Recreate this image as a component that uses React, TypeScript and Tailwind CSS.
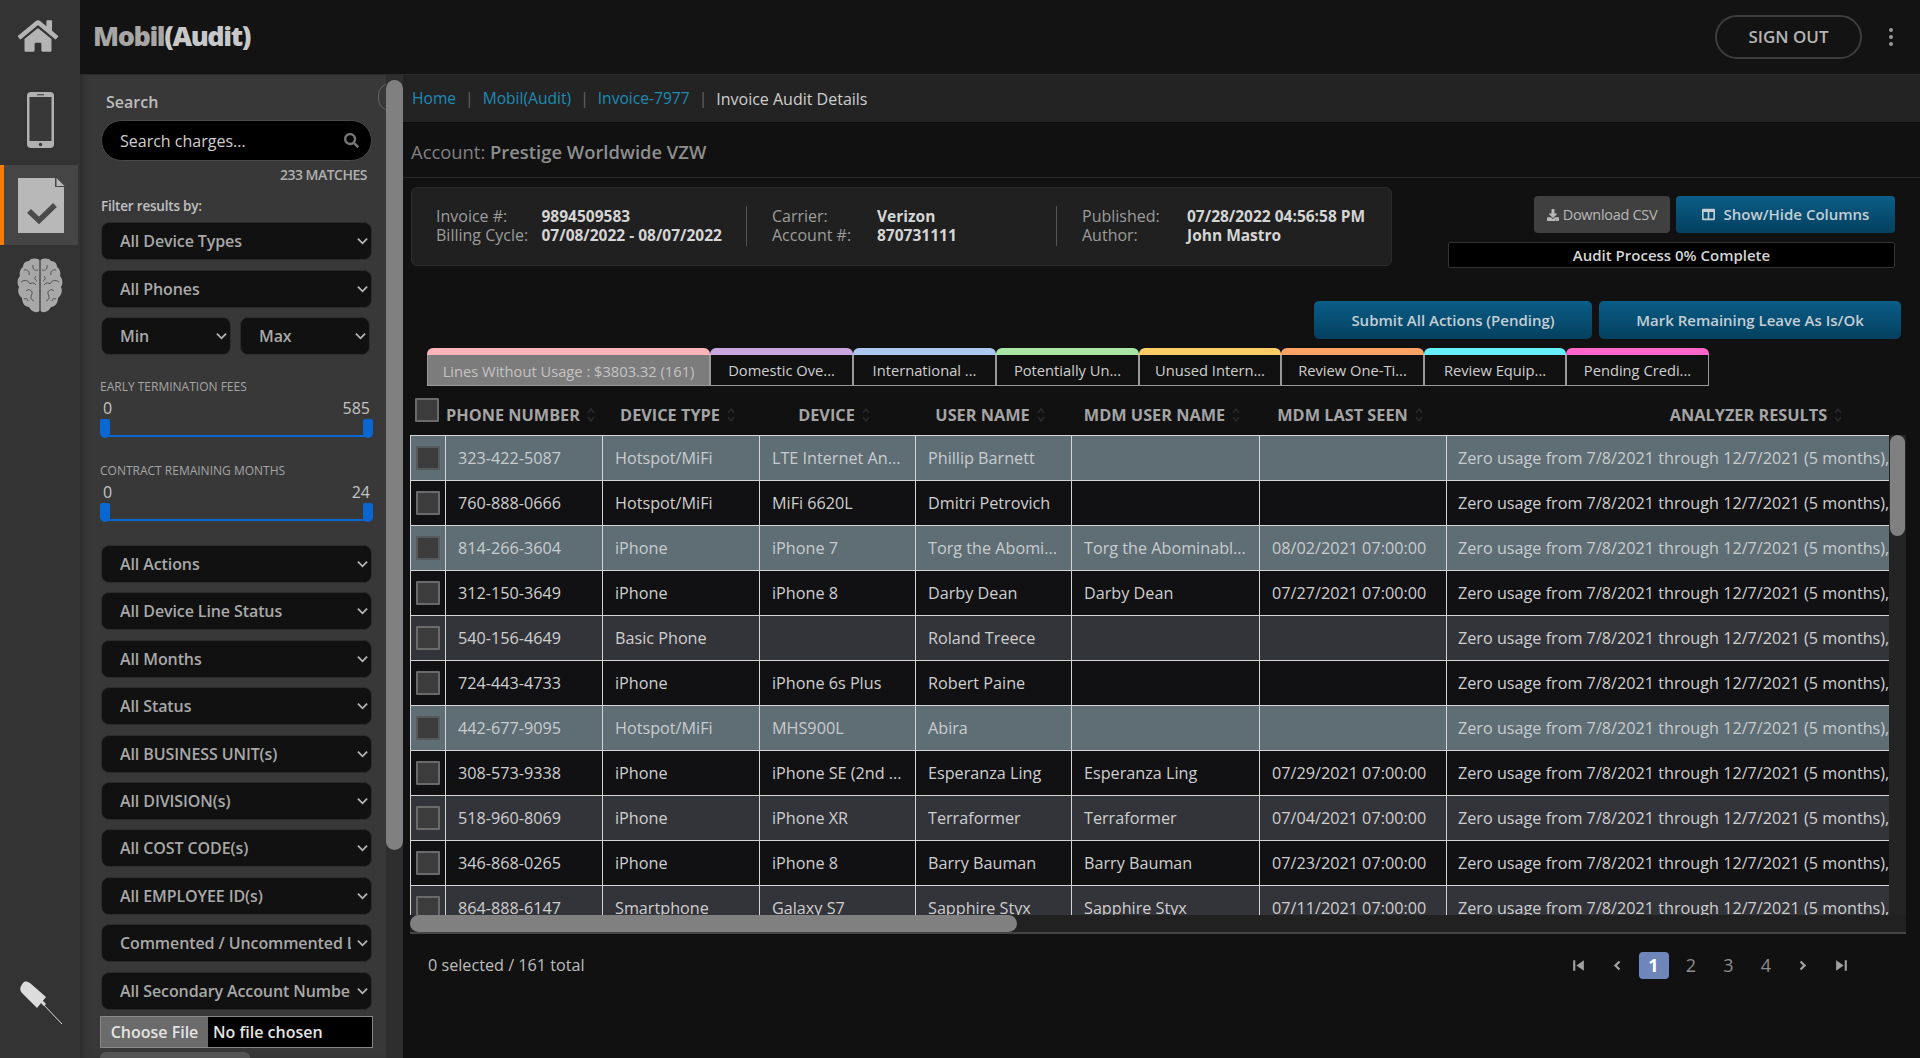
import { FaHome, FaSearch, FaDownload, FaColumns } from 'react-icons/fa';

const rowGrid = 'grid grid-cols-[36px_157px_157px_156px_156px_188px_187px_620px]';

const rows = [
  ['323-422-5087', 'Hotspot/MiFi', 'LTE Internet An...', 'Phillip Barnett', '', '', 'sel'],
  ['760-888-0666', 'Hotspot/MiFi', 'MiFi 6620L', 'Dmitri Petrovich', '', '', 'dark'],
  ['814-266-3604', 'iPhone', 'iPhone 7', 'Torg the Abomi...', 'Torg the Abominabl...', '08/02/2021 07:00:00', 'sel'],
  ['312-150-3649', 'iPhone', 'iPhone 8', 'Darby Dean', 'Darby Dean', '07/27/2021 07:00:00', 'dark'],
  ['540-156-4649', 'Basic Phone', '', 'Roland Treece', '', '', 'gray'],
  ['724-443-4733', 'iPhone', 'iPhone 6s Plus', 'Robert Paine', '', '', 'dark'],
  ['442-677-9095', 'Hotspot/MiFi', 'MHS900L', 'Abira', '', '', 'sel'],
  ['308-573-9338', 'iPhone', 'iPhone SE (2nd ...', 'Esperanza Ling', 'Esperanza Ling', '07/29/2021 07:00:00', 'dark'],
  ['518-960-8069', 'iPhone', 'iPhone XR', 'Terraformer', 'Terraformer', '07/04/2021 07:00:00', 'gray'],
  ['346-868-0265', 'iPhone', 'iPhone 8', 'Barry Bauman', 'Barry Bauman', '07/23/2021 07:00:00', 'dark'],
  ['864-888-6147', 'Smartphone', 'Galaxy S7', 'Sapphire Styx', 'Sapphire Styx', '07/11/2021 07:00:00', 'gray'],
];

const rowBg: Record<string, string> = {
  sel: 'bg-[#5f6e75] text-[#c8cccf]',
  dark: 'bg-[#111113] text-[#cfcfcf]',
  gray: 'bg-[#33343a] text-[#cfcfcf]',
};

const tabs = [
  { label: 'Domestic Ove...', w: 'w-[143px]', c: 'bg-[#c9a6e0]' },
  { label: 'International ...', w: 'w-[143px]', c: 'bg-[#aac8f0]' },
  { label: 'Potentially Un...', w: 'w-[143px]', c: 'bg-[#a8e6a3]' },
  { label: 'Unused Intern...', w: 'w-[142px]', c: 'bg-[#ffcc66]' },
  { label: 'Review One-Ti...', w: 'w-[143px]', c: 'bg-[#ffa366]' },
  { label: 'Review Equip...', w: 'w-[142px]', c: 'bg-[#66f0ff]' },
  { label: 'Pending Credi...', w: 'w-[143px]', c: 'bg-[#ff66cc]' },
];

const headers = [
  { label: 'PHONE NUMBER', pad: 'pr-[7px]' },
  { label: 'DEVICE TYPE', pad: 'pr-[7px]' },
  { label: 'DEVICE', pad: 'pr-[7px]' },
  { label: 'USER NAME', pad: 'pr-[7px]' },
  { label: 'MDM USER NAME', pad: 'pr-[7px]' },
  { label: 'MDM LAST SEEN', pad: 'pr-[6px]' },
  { label: 'ANALYZER RESULTS', pad: 'pr-[1px]' },
];

function Chevron() {
  return (
    <svg
      viewBox="0 0 12 8"
      className="absolute right-[4px] top-1/2 -translate-y-1/2 w-[11px] h-[8px] pointer-events-none"
      fill="none"
      stroke="#b5b5b5"
      strokeWidth="2"
    >
      <path d="M1 1.5 L6 6.5 L11 1.5" />
    </svg>
  );
}

function FilterSelect({ label, className = 'w-[271px]' }: { label: string; className?: string }) {
  return (
    <div className={`relative h-[38px] shrink-0 ${className}`}>
      <select className="w-full h-full appearance-none rounded-[8px] bg-[#111] border border-[#2c2c2c] pl-[18px] pr-[20px] text-[16px] font-semibold tracking-[-0.1px] text-[#a8a8a8]">
        <option>{label}</option>
      </select>
      <Chevron />
    </div>
  );
}

function RangeSlider({ label, max }: { label: string; max: string }) {
  return (
    <div className="w-[273px] ml-[-1px]">
      <div className="text-[12px] leading-[16px] text-[#a5a5a5]">{label}</div>
      <div className="flex justify-between px-[3px] mt-[3px] text-[16px] leading-[20px] text-[#c4c4c4]">
        <span>0</span>
        <span>{max}</span>
      </div>
      <div className="relative h-[20px] mt-[1px]">
        <div className="absolute left-[5px] right-[5px] bottom-[2px] h-[2px] bg-[#0a66d0]" />
        <div className="absolute left-0 top-0 w-[10px] h-[19px] rounded-b-[5px] rounded-t-[2px] bg-[#0a66d0]" />
        <div className="absolute right-0 top-0 w-[10px] h-[19px] rounded-b-[5px] rounded-t-[2px] bg-[#0a66d0]" />
      </div>
    </div>
  );
}

function PhoneIcon() {
  return (
    <svg viewBox="0 0 27 56" className="w-[27px] h-[56px]">
      <rect x="0" y="0" width="27" height="56" rx="4" fill="#b0b0b0" />
      <rect x="2.5" y="5" width="22" height="44" fill="#383838" />
      <rect x="10" y="2" width="7" height="1.4" fill="#555" />
      <circle cx="13.5" cy="52.5" r="1.7" fill="#383838" />
    </svg>
  );
}

function DocCheckIcon() {
  return (
    <svg viewBox="0 0 47 55" className="w-[47px] h-[55px]">
      <path d="M0 0 H37 V9 H46 V55 H0 Z" fill="#b8b8b8" />
      <path d="M38.5 0 L46.5 8 H38.5 Z" fill="#b8b8b8" />
      <path d="M11 33 L21 42.5 L37 27" fill="none" stroke="#4a4a4a" strokeWidth="5.5" />
    </svg>
  );
}

function BrainIcon() {
  return (
    <svg viewBox="0 0 46 56" className="w-[46px] h-[56px]">
      <path
        d="M22.4 2 C19 0 14 0 12 3 C8 3 6 6 6 9 C3 11 2 15 3 18 C0 21 0 26 2 29 C0 33 2 38 5 40 C5 45 8 49 12 49 C14 53 19 56 22.4 53 Z"
        fill="#a8a8a8"
      />
      <path
        d="M23.6 2 C27 0 32 0 34 3 C38 3 40 6 40 9 C43 11 44 15 43 18 C46 21 46 26 44 29 C46 33 44 38 41 40 C41 45 38 49 34 49 C32 53 27 56 23.6 53 Z"
        fill="#a8a8a8"
      />
      <g fill="none" stroke="#3c3c3c" strokeWidth="0.8">
        <path d="M7 12 C11 11 13 14 12 17 M16 7 C15 12 19 13 21 12 M4 24 C8 21 12 23 13 26 C15 24 18 25 19 27 M9 33 C12 30 16 33 15 36 C13 39 14 42 17 43 M7 41 C9 40 11 41 11 43 M19 18 C17 20 18 22 20 23" />
        <path d="M39 12 C35 11 33 14 34 17 M30 7 C31 12 27 13 25 12 M42 24 C38 21 34 23 33 26 C31 24 28 25 27 27 M37 33 C34 30 30 33 31 36 C33 39 32 42 29 43 M39 41 C37 40 35 41 35 43 M27 18 C29 20 28 22 26 23" />
      </g>
    </svg>
  );
}

function PinIcon() {
  return (
    <svg viewBox="0 0 44 44" className="w-[44px] h-[44px]">
      <path d="M5 1 C7 0 9 1 11 2 L27 16 L18 27 L3 12 C0 9 1 5 5 1 Z" fill="#dcdcdc" />
      <path d="M23 22 L43 43" stroke="#dcdcdc" strokeWidth="1" />
      <path d="M22 20 L26 24" stroke="#dcdcdc" strokeWidth="3" />
    </svg>
  );
}

function SortArrows() {
  return (
    <svg viewBox="0 0 10 16" className="w-[10px] h-[16px] shrink-0" fill="none" stroke="#2a2a2a" strokeWidth="1.4">
      <path d="M2 6 L5 2 L8 6" />
      <path d="M2 10 L5 14 L8 10" />
    </svg>
  );
}

function Checkbox({ dim }: { dim?: boolean }) {
  return (
    <div
      className={`w-[24px] h-[24px] bg-[#3c3c3c] border-2 rounded-[1px] ${dim ? 'border-[#55595c]' : 'border-[#6a6a6a]'}`}
    />
  );
}

function PagerGlyph({ d }: { d: string }) {
  return (
    <span className="w-[30px] h-[27px] flex items-center justify-center">
      <svg viewBox="0 0 14 14" className="w-[15px] h-[15px]" fill="#a0a0a0">
        <path d={d} />
      </svg>
    </span>
  );
}

export default function App() {
  return (
    <div className="flex h-screen w-full overflow-hidden bg-[#111] font-['Open_Sans',sans-serif]">
      {/* left rail */}
      <aside className="w-[80px] shrink-0 flex flex-col bg-[#333] relative">
        <div className="h-[75px] flex items-center justify-center pr-[4px] pb-[3px]">
          <FaHome className="w-[42px] h-[36px] text-[#b4b4b4]" />
        </div>
        <div className="h-[90px] flex items-center justify-center">
          <PhoneIcon />
        </div>
        <div className="h-[80px] flex items-center justify-center bg-[#454545] border-l-[4px] border-[#f57c00] mr-[2px]">
          <DocCheckIcon />
        </div>
        <div className="mt-[13px] flex justify-center">
          <BrainIcon />
        </div>
        <div className="mt-auto mb-[33px] ml-[19px]">
          <PinIcon />
        </div>
      </aside>

      <div className="flex-1 min-w-0 flex flex-col">
        {/* top bar */}
        <header className="h-[75px] shrink-0 flex items-center bg-[#131313] border-b border-[#2b2b2b]">
          <div className="ml-[13px] mb-[1px] text-[27px] font-extrabold tracking-[-1.4px] text-[#a6a6a6]">
            Mobil<span className="text-[#c8c8c8]">(Audit)</span>
          </div>
          <button className="ml-auto w-[147px] h-[44px] rounded-full border-2 border-[#3d3d3d] text-[17px] font-semibold text-[#b5b5b5]">
            SIGN OUT
          </button>
          <div className="ml-[27px] mr-[27px] flex flex-col gap-[3px]">
            <span className="w-[4px] h-[4px] rounded-full bg-[#9a9a9a]" />
            <span className="w-[4px] h-[4px] rounded-full bg-[#9a9a9a]" />
            <span className="w-[4px] h-[4px] rounded-full bg-[#9a9a9a]" />
          </div>
        </header>

        <div className="flex-1 min-h-0 flex">
          {/* filter sidebar */}
          <aside className="w-[323px] shrink-0 relative overflow-hidden bg-[#383838] pl-[21px] shadow-[inset_6px_0_6px_-4px_#2a2a2a]">
            <div className="absolute left-[298px] top-[8px] w-[24px] h-[28px] rounded-full border border-[#666]" />
            <div className="absolute right-0 top-0 bottom-0 w-[17px] bg-[#2e2e2e]">
              <div className="mt-[5px] h-[770px] rounded-full bg-[#808080]" />
            </div>

            <div className="pt-[17px] pl-[5px] text-[16px] leading-[20px] font-semibold text-[#bdbdbd]">Search</div>
            <div className="relative mt-[8px] w-[271px] h-[41px]">
              <input
                className="w-full h-full rounded-full bg-black border border-[#4a4a4a] pl-[18px] pr-[40px] text-[16px] font-medium text-[#cfcfcf] placeholder:text-[#cfcfcf]"
                placeholder="Search charges..."
              />
              <FaSearch className="absolute right-[13px] top-[13px] w-[15px] h-[15px] text-[#777]" />
            </div>
            <div className="w-[266px] mt-[5px] text-right text-[14px] leading-[18px] font-semibold tracking-[-0.5px] text-[#b0b0b0]">
              233 MATCHES
            </div>
            <div className="mt-[13px] text-[13.5px] leading-[18px] font-semibold tracking-[-0.2px] text-[#c0c0c0]">
              Filter results by:
            </div>
            <div className="mt-[7px] flex flex-col gap-[9.5px]">
              <FilterSelect label="All Device Types" />
              <FilterSelect label="All Phones" />
              <div className="flex gap-[9px]">
                <FilterSelect label="Min" className="w-[130px]" />
                <FilterSelect label="Max" className="w-[130px]" />
              </div>
            </div>
            <div className="mt-[24px]">
              <RangeSlider label="EARLY TERMINATION FEES" max="585" />
            </div>
            <div className="mt-[24px]">
              <RangeSlider label="CONTRACT REMAINING MONTHS" max="24" />
            </div>
            <div className="mt-[22px] flex flex-col gap-[9.4px]">
              <FilterSelect label="All Actions" />
              <FilterSelect label="All Device Line Status" />
              <FilterSelect label="All Months" />
              <FilterSelect label="All Status" />
              <FilterSelect label="All BUSINESS UNIT(s)" />
              <FilterSelect label="All DIVISION(s)" />
              <FilterSelect label="All COST CODE(s)" />
              <FilterSelect label="All EMPLOYEE ID(s)" />
              <FilterSelect label="Commented / Uncommented Lines" />
              <FilterSelect label="All Secondary Account Numbers" />
            </div>
            <div className="mt-[6px] ml-[-1px] w-[273px] h-[32px] flex items-center border border-[#888] bg-black text-[16px] font-semibold text-[#e4e4e4]">
              <span className="h-full w-[107px] flex items-center justify-center bg-[#6b6b6b]">Choose File</span>
              <span className="ml-[5px]">No file chosen</span>
            </div>
            <div className="mt-[4px] ml-[-1px] w-[150px] h-[30px] rounded-[6px] bg-[#555]" />
          </aside>

          {/* main content */}
          <main className="flex-1 min-w-0 flex flex-col">
            <nav className="h-[48px] shrink-0 flex items-center pl-[9px] bg-[#232323] border-b border-[#0c0c0c] text-[15.6px] text-[#1d8ab5]">
              <span>Home</span>
              <span className="mx-[9px] text-[#666]">|</span>
              <span>Mobil(Audit)</span>
              <span className="mx-[9px] text-[#666]">|</span>
              <span>Invoice-7977</span>
              <span className="mx-[9px] text-[#666]">|</span>
              <span className="font-medium text-[16px] text-[#cfcfcf]">Invoice Audit Details</span>
            </nav>
            <div className="h-[55px] shrink-0 flex items-center pl-[8px] pt-[4px] border-b border-[#2a2a2a] text-[18.4px] text-[#808080]">
              Account:&nbsp;<span className="font-semibold text-[#8e8e8e]">Prestige Worldwide VZW</span>
            </div>

            <div className="mt-[9px] pl-[8px] pr-[25px] flex justify-between">
              <section className="w-[981px] h-[79px] flex items-center pl-[24px] pb-[1px] rounded-[6px] border border-[#2c2c2c] bg-[#202020] text-[16px] leading-[19.5px] text-[#9c9c9c]">
                <div className="grid grid-cols-[105.5px_auto] w-[310px]">
                  <span>Invoice #:</span>
                  <span className="font-bold text-[15.5px] text-[#d5d5d5]">9894509583</span>
                  <span>Billing Cycle:</span>
                  <span className="font-bold text-[15.5px] text-[#d5d5d5]">07/08/2022 - 08/07/2022</span>
                </div>
                <div className="h-[40px] w-px bg-[#555] mr-[25px]" />
                <div className="grid grid-cols-[105px_auto] w-[284px]">
                  <span>Carrier:</span>
                  <span className="font-bold text-[15.5px] text-[#d5d5d5]">Verizon</span>
                  <span>Account #:</span>
                  <span className="font-bold text-[15.5px] text-[#d5d5d5]">870731111</span>
                </div>
                <div className="h-[40px] w-px bg-[#555] mr-[25px]" />
                <div className="grid grid-cols-[105px_auto]">
                  <span>Published:</span>
                  <span className="font-bold text-[15.5px] text-[#d5d5d5]">07/28/2022 04:56:58 PM</span>
                  <span>Author:</span>
                  <span className="font-bold text-[15.5px] text-[#d5d5d5]">John Mastro</span>
                </div>
              </section>

              <div className="w-[447px] pt-[9px] flex flex-col items-end">
                <div className="flex gap-[6px]">
                  <button className="w-[136px] h-[37px] flex items-center justify-center gap-[4px] rounded-[4px] bg-[#404040] text-[14.5px] font-medium tracking-[-0.3px] text-[#b8b8b8]">
                    <FaDownload className="w-[12px] h-[12px]" />
                    Download CSV
                  </button>
                  <button className="w-[219px] h-[37px] flex items-center justify-center gap-[9px] rounded-[4px] bg-gradient-to-b from-[#0b5d88] to-[#04405f] text-[15px] font-semibold text-[#c4ced4]">
                    <FaColumns className="w-[13px] h-[13px]" />
                    Show/Hide Columns
                  </button>
                </div>
                <div className="mt-[9px] w-full h-[26px] flex items-center justify-center rounded-[2px] border border-[#333] bg-black text-[15px] font-semibold text-[#d5d5d5]">
                  Audit Process 0% Complete
                </div>
              </div>
            </div>

            <div className="mt-[33px] pr-[19px] flex justify-end gap-[7px]">
              <button className="w-[278px] h-[38px] rounded-[5px] bg-gradient-to-b from-[#0b5d88] to-[#04405f] text-[15px] font-semibold text-[#c4ced4]">
                Submit All Actions (Pending)
              </button>
              <button className="w-[302px] h-[38px] rounded-[5px] bg-gradient-to-b from-[#0b5d88] to-[#04405f] text-[15px] font-semibold text-[#c4ced4]">
                Mark Remaining Leave As Is/Ok
              </button>
            </div>

            {/* tabs */}
            <div className="mt-[9px] pl-[24px] flex h-[38px] shrink-0">
              <div className="w-[283px] flex flex-col rounded-t-[6px] overflow-hidden">
                <div className="h-[7px] bg-[#ffb3ba]" />
                <div className="flex-1 flex items-center justify-center pt-[3px] border-x border-b border-[#999] bg-[#7c7c7c] text-[14.7px] text-[#c4c4c4]">
                  Lines Without Usage : $3803.32 (161)
                </div>
              </div>
              {tabs.map((t) => (
                <div key={t.label} className={`${t.w} flex flex-col rounded-t-[6px] overflow-hidden`}>
                  <div className={`h-[7px] ${t.c}`} />
                  <div className="flex-1 flex items-center justify-center pt-[1px] border-x border-b border-[#999] bg-[#111] text-[14.7px] text-[#cfcfcf]">
                    {t.label}
                  </div>
                </div>
              ))}
            </div>

            {/* table */}
            <div className="ml-[7px] w-[1479px] overflow-hidden shrink-0">
              <div className={`${rowGrid} h-[49px] items-center text-[16.3px] font-bold text-[#a4a4a4]`}>
                <div className="pl-[5px] self-start mt-[12px]">
                  <Checkbox />
                </div>
                {headers.map((h) => (
                  <div key={h.label} className={`flex items-center justify-center gap-[6px] whitespace-nowrap pt-[9px] ${h.pad}`}>
                    {h.label}
                    <SortArrows />
                  </div>
                ))}
              </div>
            </div>
            <div className="ml-[7px] flex w-[1496px] h-[480px] shrink-0">
              <div className="w-[1479px] overflow-hidden">
                {rows.map((r) => (
                  <div key={r[0]} className={`${rowGrid} h-[45px] ${rowBg[r[6]]} text-[16.2px] border-t border-[#d4d4d4]`}>
                    <div className="flex items-center justify-center border-x border-[#d4d4d4]">
                      <Checkbox dim={r[6] === 'sel'} />
                    </div>
                    {r.slice(0, 6).map((c, i) => (
                      <div key={i} className="flex items-center pl-[12px] whitespace-nowrap overflow-hidden border-r border-[#d4d4d4]">
                        {c}
                      </div>
                    ))}
                    <div className="flex items-center pl-[11px] whitespace-nowrap">
                      Zero usage from 7/8/2021 through 12/7/2021 (5 months), no charges
                    </div>
                  </div>
                ))}
              </div>
              <div className="w-[17px] bg-[#242424]">
                <div className="mx-[1px] h-[101px] rounded-full bg-[#808080]" />
              </div>
            </div>
            <div className="ml-[7px] w-[1496px] h-[19px] shrink-0 bg-[#212121] border-b-2 border-[#444]">
              <div className="w-[607px] h-[17px] rounded-full bg-[#808080]" />
            </div>

            {/* footer */}
            <div className="ml-[7px] w-[1496px] mt-[18px] flex items-center justify-between pl-[18px] pr-[50px] text-[16.2px] text-[#bdbdbd]">
              <span>0 selected / 161 total</span>
              <div className="flex items-center gap-[7.5px]">
                <PagerGlyph d="M2 2 H4 V12 H2 Z M12 2 V12 L5 7 Z" />
                <PagerGlyph d="M9 2.5 L10.5 4 L7.5 7 L10.5 10 L9 11.5 L4.5 7 Z" />
                <span className="w-[30px] h-[27px] flex items-center justify-center rounded-[4px] bg-[#6f86bb] text-[18px] font-bold text-white">
                  1
                </span>
                <span className="w-[30px] h-[27px] flex items-center justify-center text-[18px] text-[#8e8e8e]">2</span>
                <span className="w-[30px] h-[27px] flex items-center justify-center text-[18px] text-[#8e8e8e]">3</span>
                <span className="w-[30px] h-[27px] flex items-center justify-center text-[18px] text-[#8e8e8e]">4</span>
                <PagerGlyph d="M5 2.5 L3.5 4 L6.5 7 L3.5 10 L5 11.5 L9.5 7 Z" />
                <PagerGlyph d="M12 2 H10 V12 H12 Z M2 2 V12 L9 7 Z" />
              </div>
            </div>
          </main>
        </div>
      </div>
    </div>
  );
}
